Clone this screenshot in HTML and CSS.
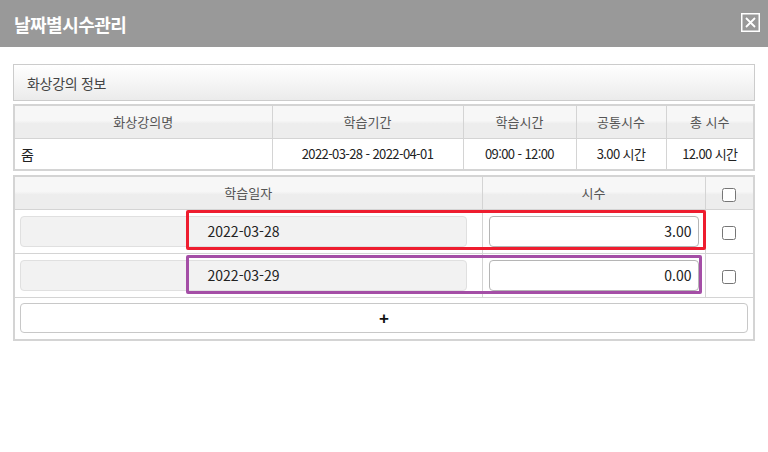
FILE: index.html
```html
<!DOCTYPE html>
<html lang="ko">
<head>
<meta charset="UTF-8" />
<title>날짜별시수관리</title>
<link rel="stylesheet" href="styles.css">
</head>
<body>
<div class="modal">
    <div class="modal-head">
        <h2>날짜별시수관리</h2>
        <button class="close-btn" type="button" aria-label="닫기">
            <svg width="19" height="19" viewBox="0 0 19 19">
                <rect x="0.75" y="0.75" width="17.5" height="17.5" fill="none" stroke="#fff" stroke-width="1.5" />
                <path d="M5 5 L14 14 M14 5 L5 14" stroke="#fff" stroke-width="1.8" />
            </svg>
        </button>
    </div>

    <div class="modal-body">
        <div class="panel-title">화상강의 정보</div>

        <table class="grid info">
            <colgroup>
                <col style="width:258px"><col style="width:191px"><col style="width:113px"><col style="width:90px"><col>
            </colgroup>
            <thead>
                <tr>
                    <th>화상강의명</th>
                    <th>학습기간</th>
                    <th>학습시간</th>
                    <th>공통시수</th>
                    <th>총 시수</th>
                </tr>
            </thead>
            <tbody>
                <tr>
                    <td class="left">줌</td>
                    <td class="num">2022-03-28 - 2022-04-01</td>
                    <td class="num">09:00 - 12:00</td>
                    <td class="num">3.00 시간</td>
                    <td class="num">12.00 시간</td>
                </tr>
            </tbody>
        </table>

        <div class="dates-wrap">
            <table class="grid dates">
                <colgroup>
                    <col style="width:468px"><col style="width:223px"><col>
                </colgroup>
                <thead>
                    <tr>
                        <th>학습일자</th>
                        <th>시수</th>
                        <th><input type="checkbox" class="chk"></th>
                    </tr>
                </thead>
                <tbody>
                    <tr>
                        <td><input class="date-input" type="text" value="2022-03-28" readonly></td>
                        <td><input class="hour-input" type="text" value="3.00"></td>
                        <td class="center"><input type="checkbox" class="chk"></td>
                    </tr>
                    <tr>
                        <td><input class="date-input" type="text" value="2022-03-29" readonly></td>
                        <td><input class="hour-input" type="text" value="0.00"></td>
                        <td class="center"><input type="checkbox" class="chk"></td>
                    </tr>
                    <tr>
                        <td colspan="3"><button class="add-btn" type="button">+</button></td>
                    </tr>
                </tbody>
            </table>
            <div class="mark mark-red"></div>
            <div class="mark mark-purple"></div>
        </div>
    </div>
</div>
</body>
</html>
```

FILE: styles.css
```css
* {
    box-sizing: border-box;
}
body, html {
    margin: 0;
    background: #fff;
    font-family: "Noto Sans CJK KR", "Noto Sans", sans-serif;
    color: #333;
}
.modal-head {
    height: 47px;
    background: #999;
    display: flex;
    align-items: center;
    justify-content: space-between;
    padding: 0 8px 0 14px;
}
.modal-head h2 {
    margin: 0;
    color: #fff;
    font-size: 18px;
    font-weight: bold;
    letter-spacing: -0.5px;
}
.close-btn {
    background: transparent;
    border: 0;
    padding: 0;
    width: 19px;
    height: 19px;
    margin-top: -3px;
    cursor: pointer;
}
.close-btn svg {
    display: block;
}
.modal-body {
    padding: 17px 13px 0;
}
.panel-title {
    height: 37px;
    border: 1px solid #ccc;
    background: linear-gradient(to bottom, #fff, #ebebeb);
    padding-left: 13px;
    display: flex;
    align-items: center;
    font-size: 14px;
    color: #444;
    letter-spacing: -0.3px;
}
.grid {
    width: 100%;
    border-collapse: collapse;
    table-layout: fixed;
    border: 2px solid #d4d4d4;
    font-size: 13px;
}
.grid th, .grid td {
    border: 1px solid #d4d4d4;
    padding: 0;
}
.grid th {
    height: 33px;
    font-weight: normal;
    color: #555;
    background: linear-gradient(to bottom, #f7f7f7 0, #f7f7f7 45%, #ededed 55%, #ededed 100%);
}
.info {
    margin-top: 3px;
}
.info td {
    height: 32px;
    text-align: center;
    color: #222;
}
.info td.left {
    text-align: left;
    padding-left: 6px;
    font-size: 14px;
}
.info td.num {
    letter-spacing: -0.6px;
}
.dates-wrap {
    position: relative;
    margin-top: 4px;
}
.dates td {
    height: 44px;
    padding: 0 5px;
}
.dates td.center {
    text-align: center;
}
.dates tbody tr:last-child td {
    height: 43px;
}
.date-input, .hour-input {
    display: block;
    height: 31px;
    border-radius: 4px;
    font-family: inherit;
    font-size: 14px;
    color: #222;
    outline: none;
}
.date-input {
    width: 447px;
    background: #f2f2f2;
    border: 1px solid #e0e0e0;
    text-align: center;
    padding: 0;
}
.hour-input {
    margin-left: 1px;
    width: 210px;
    background: #fff;
    border: 1px solid #b5b5b5;
    text-align: right;
    padding: 0 6px 0 0;
}
.chk {
    width: 14px;
    height: 14px;
    margin: 0;
    vertical-align: middle;
}
.add-btn {
    width: 100%;
    height: 30px;
    background: #fff;
    border: 1px solid #c8c8c8;
    border-radius: 4px;
    font-size: 17px;
    font-weight: bold;
    line-height: 1;
    color: #111;
    cursor: pointer;
}
.mark {
    position: absolute;
    border: 3px solid;
    border-radius: 2px;
    pointer-events: none;
}
.mark-red {
    left: 173px;
    top: 35px;
    width: 520px;
    height: 40px;
    border-color: #ee1d2f;
}
.mark-purple {
    left: 173px;
    top: 80px;
    width: 516px;
    height: 39px;
    border-color: #a44ea6;
}
```
